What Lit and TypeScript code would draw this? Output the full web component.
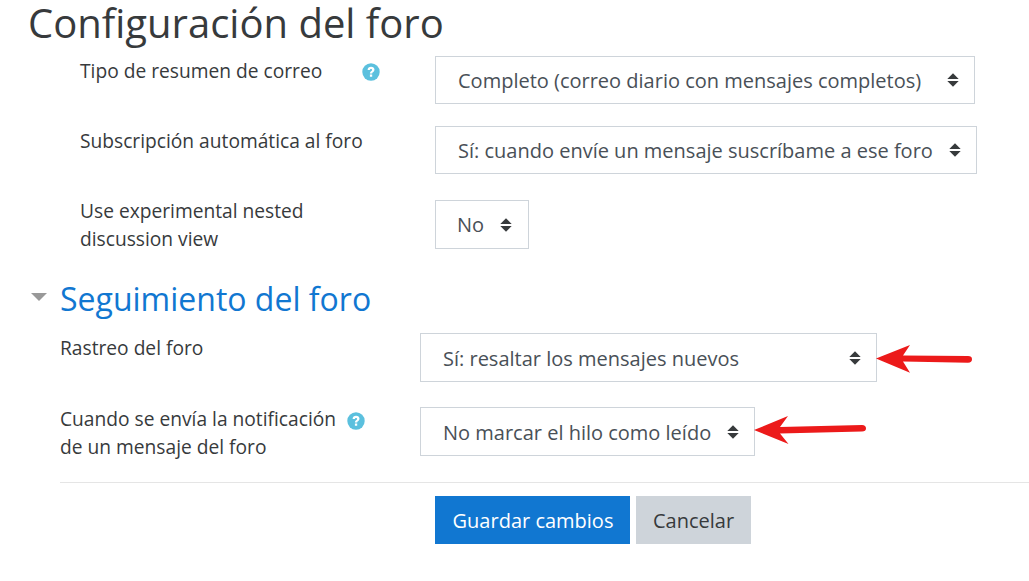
import { LitElement, html, css, svg } from "lit";
import { customElement } from "lit/decorators.js";

const caret = svg`<svg class="caret" width="12" height="14" viewBox="0 0 12 14"><path d="M6 .2 L11.7 6 H.3 Z M.3 8 H11.7 L6 13.8 Z" fill="#373a3c"/></svg>`;
const help = html`<svg class="help" width="18" height="18" viewBox="0 0 18 18"><circle cx="9" cy="9" r="8.7" fill="#5bc0de"/><path d="M5.6 7 C5.6 4.9 7.2 3.8 9.1 3.8 C11 3.8 12.5 5 12.5 6.8 C12.5 9 10.2 9 10.2 10.6 H7.9 C7.9 8 10.1 8 10.1 6.9 C10.1 6.3 9.6 5.9 9 5.9 C8.4 5.9 7.9 6.4 7.9 7 Z M7.9 11.4 H10.2 V13.7 H7.9 Z" fill="#fff"/></svg>`;

@customElement("app-root")
export class AppRoot extends LitElement {
  static styles = css`
    :host { display: block; width: 1029px; height: 581px; position: relative; overflow: hidden; background: #fff; font-family: "Open Sans", sans-serif; font-size: 20px; line-height: 28px; color: #373a3c; }
    h2 { margin: 0; font-size: 40px; font-weight: 400; line-height: 45px; padding: 0 0 11px 28px; color: #373a3c; }
    .row { display: flex; align-items: flex-start; }
    .indent { padding-left: 80px; }
    .sub { padding-left: 60px; }
    .label { display: flex; align-items: flex-start; padding-top: 1px; font-size: 19.2px; }
    .indent .label { width: 355px; }
    .sub .label { width: 360px; }
    .up { margin-top: -4px; }
    .sub .up { margin-top: -3px; }
    .l1 { width: 282px; }
    .l2 { width: 287px; }
    .help { flex: none; margin-top: 6px; }
    .sub .help { margin-top: 4px; }
    .select { box-sizing: border-box; height: 48px; border: 1px solid #ced4da; display: flex; align-items: center; padding: 2px 15px 0 22px; color: #495057; white-space: nowrap; justify-content: space-between; }
    .caret { flex: none; margin-top: -2px; }
    .w1 { width: 540px; }
    .w2 { width: 542px; }
    .w3 { width: 94px; height: 49px; padding: 0 16px 0 21px; }
    .w3 .caret { margin-top: 0; }
    .w4 { width: 457px; height: 49px; }
    .w5 { width: 335px; height: 49px; }
    .gap1 { margin-top: 22px; }
    .gap2 { margin-top: 26px; }
    .gap3 { margin-top: 25px; }
    .section { display: flex; align-items: center; height: 41px; padding-left: 31px; margin-top: 25px; margin-bottom: 14px; }
    .tri { width: 0; height: 0; border-left: 8px solid transparent; border-right: 8px solid transparent; border-top: 8px solid #999; margin-right: 13px; margin-top: -3px; }
    h3 { margin: 0; font-size: 32px; font-weight: 400; line-height: 41px; color: #1177d1; }
    hr { margin: 21px 0 13px 60px; border: 0; border-top: 1px solid #e5e5e5; }
    .actions { display: flex; gap: 6px; padding-left: 435px; }
    button { font: inherit; height: 48px; border: 0; padding: 2px 0 0; border-radius: 0; }
    .primary { width: 195px; background: #1177d1; color: #fff; padding-left: 1px; }
    .secondary { width: 115px; background: #ced4da; color: #373a3c; }
    .arrow { position: absolute; left: 0; top: 0; pointer-events: none; }
  `;

  render() {
    return html`
      <h2>Configuración del foro</h2>
      <div class="row indent">
        <div class="label"><span class="l1">Tipo de resumen de correo</span>${help}</div>
        <div class="select w1"><span>Completo (correo diario con mensajes completos)</span>${caret}</div>
      </div>
      <div class="row indent gap1">
        <div class="label">Subscripción automática al foro</div>
        <div class="select w2"><span>Sí: cuando envíe un mensaje suscríbame a ese foro</span>${caret}</div>
      </div>
      <div class="row indent gap2">
        <div class="label"><span class="up">Use experimental nested<br />discussion view</span></div>
        <div class="select w3"><span>No</span>${caret}</div>
      </div>
      <div class="section"><div class="tri"></div><h3>Seguimiento del foro</h3></div>
      <div class="row sub">
        <div class="label">Rastreo del foro</div>
        <div class="select w4"><span>Sí: resaltar los mensajes nuevos</span>${caret}</div>
      </div>
      <div class="row sub gap3">
        <div class="label"><span class="l2 up">Cuando se envía la notificación<br />de un mensaje del foro</span>${help}</div>
        <div class="select w5"><span>No marcar el hilo como leído</span>${caret}</div>
      </div>
      <hr />
      <div class="actions">
        <button class="primary">Guardar cambios</button>
        <button class="secondary">Cancelar</button>
      </div>
      <svg class="arrow" width="1029" height="581" viewBox="0 0 1029 581">
        <path d="M876 358.5 L910 345 L903 355.5 L968 356 Q972 356 972 359.3 Q972 362.7 968 362.7 L903 361.5 L910 372.7 Z" fill="#ec1a1a"/>
        <path d="M754 430 L788 416 L780 427 L862 425 Q866 425 866 428.5 Q866 431.5 862 431.5 L780 433.5 L788.5 444 Z" fill="#ec1a1a"/>
      </svg>
    `;
  }
}
